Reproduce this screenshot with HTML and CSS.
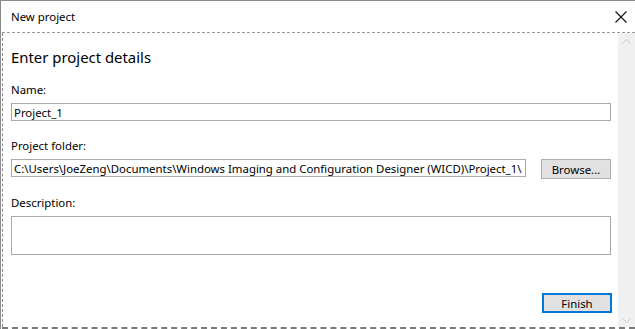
FILE: index.html
```html
<!DOCTYPE html>
<html>

<head>
  <title>New project</title>
  <link rel="stylesheet" href="styles.css">
</head>

<body>
  <div class="window">
    <div class="titlebar">
      <span class="title">New project</span>
      <button class="close-btn" aria-label="Close">
        <svg width="12" height="12" viewBox="0 0 12 12">
          <path d="M0.5 0.5 L11.5 11.5 M11.5 0.5 L0.5 11.5" stroke="#111" stroke-width="1.1" fill="none" />
        </svg>
      </button>
    </div>

    <div class="frame">
      <div class="page">
        <h2 class="page-title">Enter project details</h2>

        <label class="field-label" for="name">Name:</label>
        <input type="text" id="name" class="input-box" value="Project_1">

        <label class="field-label" for="folder">Project folder:</label>
        <div class="folder-row">
          <input type="text" id="folder" class="input-box folder-input"
            value="C:\Users\JoeZeng\Documents\Windows Imaging and Configuration Designer (WICD)\Project_1\">
          <button class="win-btn">Browse...</button>
        </div>

        <label class="field-label" for="description">Description:</label>
        <textarea id="description" class="input-box summary-input"></textarea>

        <div class="footer">
          <button class="win-btn default-btn">Finish</button>
        </div>
      </div>

      <div class="scrollbar">
        <svg width="9" height="5" viewBox="0 0 9 5">
          <path d="M0.5 4.5 L4.5 0.5 L8.5 4.5" stroke="#c8c8c8" fill="none" />
        </svg>
        <svg width="9" height="5" viewBox="0 0 9 5">
          <path d="M0.5 0.5 L4.5 4.5 L8.5 0.5" stroke="#c8c8c8" fill="none" />
        </svg>
      </div>
    </div>
  </div>
</body>

</html>
```

FILE: styles.css
```css
* {
  font-family: "Segoe UI", "Noto Sans", sans-serif;
  box-sizing: border-box;
}

body {
  margin: 0;
  background-color: white;
}

.window {
  width: 635px;
  height: 329px;
  display: flex;
  flex-direction: column;
  border-top: 1px solid #8a8a8a;
  border-left: 1px solid #8a8a8a;
  background-color: white;
}

.titlebar {
  height: 31px;
  display: flex;
  align-items: center;
  padding-left: 10px;
  padding-right: 8px;
}

.title {
  font-size: 11.4px;
  color: black;
  margin-top: -1px;
}

.close-btn {
  margin-left: auto;
  background: none;
  border: none;
  padding: 0;
  width: 12px;
  height: 12px;
  display: flex;
}

.frame {
  flex-grow: 1;
  display: flex;
  margin-left: 1px;
  border-top: 1px dashed #9a9a9a;
  border-bottom: 2px dashed #7a7a7a;
}

.page {
  flex-grow: 1;
  display: flex;
  flex-direction: column;
  padding: 13px 7px 0 8px;
  border-left: 1px dashed #8a8a8a;
}

.page-title {
  font-size: 14.9px;
  font-weight: normal;
  margin: 0 0 14px;
  line-height: 22px;
  color: black;
}

.field-label {
  font-size: 11.4px;
  line-height: 16px;
  margin-bottom: 5px;
  color: black;
}

.input-box {
  font-size: 11.4px;
  height: 18px;
  border: 1px solid #a9a9a9;
  padding: 0 2px;
  margin: 0 0 17px;
  color: black;
  outline: 0;
}

.folder-row {
  display: flex;
  gap: 15px;
  margin-bottom: 16px;
}

.folder-input {
  flex-grow: 1;
  margin: 0;
}

.summary-input {
  height: 39px;
  resize: none;
  margin: 0;
}

.win-btn {
  width: 70px;
  height: 20px;
  font-size: 11.4px;
  padding: 0;
  background-color: #e1e1e1;
  border: 1px solid #adadad;
  color: black;
}

.footer {
  display: flex;
  justify-content: flex-end;
  margin-top: 38px;
  margin-right: -1px;
}

.default-btn {
  width: 70px;
  border: 2px solid #0078d7;
}

.scrollbar {
  width: 17px;
  background-color: #f0f0f0;
  display: flex;
  flex-direction: column;
  justify-content: space-between;
  align-items: center;
  padding: 6px 0 4px;
}
```
